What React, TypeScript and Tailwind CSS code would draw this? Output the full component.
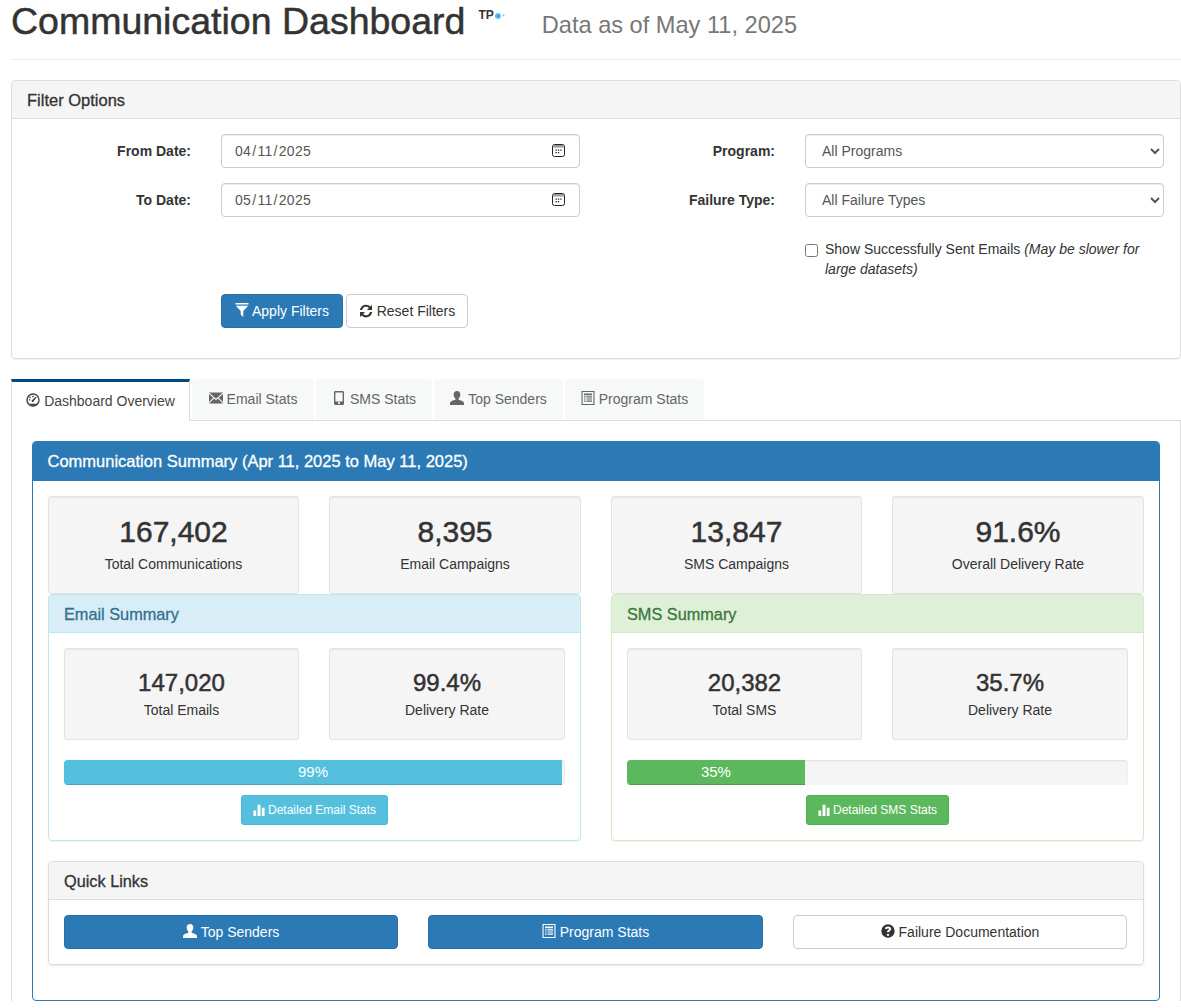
import type { ReactNode } from "react";

const blueBtn = "bg-[#2b7ab5] border-[#2a6fa5] text-white";
const whiteBtn = "bg-white border-[#cccccc] text-[#333333]";

function Glyph({ children, className }: { children: ReactNode; className?: string }) {
  return (
    <svg viewBox="0 0 14 14" fill="currentColor" className={`inline-block shrink-0 ${className ?? "w-[14px] h-[14px]"}`}>
      {children}
    </svg>
  );
}

const FilterIcon = () => (
  <Glyph>
    <path d="M.5 0h13v1.500H.5zM.8 2.800h12.400L8.300 8v6L5.700 11.800V8z" />
  </Glyph>
);
const RefreshIcon = () => (
  <Glyph>
    <path d="M7 .8c1.700 0 3.200.7 4.300 1.800L13 .9v5H8l1.900-1.900A3.900 3.900 0 0 0 3.100 6H.9A6 6 0 0 1 7 .8zM1 8.100h5L4.100 10a3.900 3.900 0 0 0 6.800-2h2.200A6 6 0 0 1 2.700 11.400L1 13.100z" />
  </Glyph>
);
const GaugeIcon = () => (
  <Glyph>
    <path
      fillRule="evenodd"
      d="M7 .3a6.700 6.700 0 1 1 0 13.400A6.700 6.700 0 0 1 7 .3zm0 1.500a5.200 5.200 0 0 0-5.200 5.200c0 1.500.6 2.800 1.600 3.800h7.200A5.200 5.200 0 0 0 7 1.800zM6.300 2.800h1.400v1.400H6.300zM2.900 6.200h1.400v1.400H2.900zM3.900 3.500l1.100 1-.9.900-1-1zM9.900 3.600l.8.700-2.700 3.500a1.200 1.200 0 1 1-1.500-1.100z"
    />
  </Glyph>
);
const MailIcon = () => (
  <Glyph>
    <path d="M0 1.600h14L7 7.800zM0 3l4.300 3.800L0 11zM14 3v8L9.700 6.800zM5.100 7.600 7 9.200l1.900-1.600 5.100 4.800H0z" />
  </Glyph>
);
const PhoneIcon = () => (
  <Glyph>
    <path
      fillRule="evenodd"
      d="M3.500 0h7c.9 0 1.500.6 1.500 1.500v11c0 .9-.6 1.500-1.500 1.500h-7C2.600 14 2 13.400 2 12.500v-11C2 .6 2.600 0 3.500 0zm-.1 1.600v8.900h7.200V1.600zM7 11a1.100 1.100 0 1 0 0 2.200A1.100 1.100 0 0 0 7 11z"
    />
  </Glyph>
);
const UserIcon = () => (
  <Glyph>
    <path d="M7 0c2.200 0 3.300 1.500 3.300 3.500 0 1.600-.7 3.200-1.700 4.100v1.200c1.900.5 4.900 1.300 5.400 3V14H0v-2.200c.5-1.700 3.500-2.500 5.400-3V7.600C4.400 6.700 3.700 5.100 3.700 3.500 3.700 1.500 4.800 0 7 0z" />
  </Glyph>
);
const ListIcon = () => (
  <Glyph>
    <path
      fillRule="evenodd"
      d="M.5 0h13v14H.5zm1.100 1.100v11.800h10.800V1.100zM3 2.400h8v1.800H3zM3 5.200h1.500v1.200H3zM5.500 5.200H11v1.200H5.500zM3 7.400h1.500v1.200H3zM5.500 7.400H11v1.200H5.500zM3 9.600h1.500v1.200H3zM5.500 9.600H11v1.200H5.500z"
    />
  </Glyph>
);
const BarsIcon = () => (
  <Glyph className="w-[12px] h-[12px]">
    <path d="M.5 7.500h3.200V14H.5zM5.300 1h3.400v13H5.300zM10.300 4.500h3.200V14h-3.200z" />
  </Glyph>
);
const HelpIcon = () => (
  <Glyph>
    <path
      fillRule="evenodd"
      d="M7 .3a6.700 6.700 0 1 1 0 13.400A6.700 6.700 0 0 1 7 .3zM5.900 9.900v1.900h2.200V9.900zM7 2.400c-1.600 0-2.800.8-3 2.400l2 .4c.1-.7.400-1 1-1s.9.300.9.800c0 1-2 1.200-2 3.300h2.200c0-1.300 2.100-1.400 2.100-3.500 0-1.500-1.300-2.400-3.200-2.400z"
    />
  </Glyph>
);

function FormLabel({ children }: { children: ReactNode }) {
  return <label className="text-right font-bold text-[14px] leading-[34px] text-[#333333]">{children}</label>;
}

function DateField({ value }: { value: string }) {
  return (
    <div className="relative h-[34px]">
      <input
        type="date"
        defaultValue={value}
        className="h-[34px] w-full rounded border border-[#cccccc] bg-white pl-[12px] pr-[13px] text-[14px] tracking-[0.3px] text-[#555555] shadow-[inset_0_1px_1px_rgba(0,0,0,0.075)] [&::-webkit-calendar-picker-indicator]:opacity-0"
      />
      <svg viewBox="0 0 13 13" className="absolute right-[15px] top-[10px] w-[13px] h-[13px] pointer-events-none" fill="none">
        <rect x="0.5" y="0.5" width="12" height="12" rx="2" stroke="#222222" />
        <rect x="1" y="1" width="11" height="2.500" fill="#9a9a9a" />
        <path d="M3.500 5.500h1.300v1.300H3.500zM5.900 5.500h1.300v1.300H5.900zM8.300 5.500h1.300v1.300H8.300zM3.500 8h1.300v1.300H3.500zM5.900 8h1.300v1.300H5.900z" fill="#222222" />
      </svg>
    </div>
  );
}

function SelectField({ label }: { label: string }) {
  return (
    <select className="h-[34px] w-full rounded border border-[#cccccc] bg-white pl-[12px] pr-[0px] text-[14px] text-[#555555] shadow-[inset_0_1px_1px_rgba(0,0,0,0.075)]">
      <option>{label}</option>
    </select>
  );
}

function Tab({ icon, label, active, width }: { icon: ReactNode; label: string; active?: boolean; width: string }) {
  return (
    <div
      className={
        active
          ? `${width} h-[42px] -mb-px flex items-center justify-center gap-[4px] bg-white border-t-[3px] border-t-[#004a80] border-x border-x-[#dddddd] text-[#444444] relative z-10`
          : `${width} h-[41px] flex items-center justify-center gap-[4px] rounded-t bg-[#f7f8f8] text-[#666666]`
      }
    >
      <span className="flex -mt-[3px]">{icon}</span>
      <span>{label}</span>
    </div>
  );
}

function StatCard({ value, label, big }: { value: string; label: string; big?: boolean }) {
  return (
    <div
      className={`flex flex-col items-center rounded-[3px] border border-[#e3e3e3] bg-[#f5f5f5] shadow-[inset_0_1px_1px_rgba(0,0,0,0.05)] ${
        big ? "h-[98px] pt-[18px]" : "h-[92px] pt-[21px]"
      }`}
    >
      <div
        className={`text-[#333333] [-webkit-text-stroke:0.5px_#333333] ${
          big ? "text-[30px] leading-[33px]" : "text-[24px] leading-[26px]"
        }`}
      >
        {value}
      </div>
      <div className={`text-[14px] leading-[20px] text-[#333333] ${big ? "mt-[6px]" : "mt-[4px]"}`}>{label}</div>
    </div>
  );
}

function ChannelPanel({
  title,
  border,
  headBg,
  headText,
  stats,
  percent,
  fill,
  barWidth,
  btnClass,
  btnLabel,
}: {
  title: string;
  border: string;
  headBg: string;
  headText: string;
  stats: { value: string; label: string }[];
  percent: string;
  fill: string;
  barWidth: number;
  btnClass: string;
  btnLabel: string;
}) {
  return (
    <div className={`h-[247px] rounded border bg-white shadow-[0_1px_1px_rgba(0,0,0,0.05)] ${border}`}>
      <div className={`h-[38px] pt-[2px] rounded-t-[3px] border-b px-[15px] flex items-center text-[16.3px] ${border} ${headBg} ${headText} [-webkit-text-stroke:0.3px]`}>
        {title}
      </div>
      <div className="px-[15px] pt-[15px]">
        <div className="grid grid-cols-[235px_236px] gap-x-[30px]">
          {stats.map((s) => (
            <StatCard key={s.label} value={s.value} label={s.label} />
          ))}
        </div>
        <div className="mt-[20px] h-[25px] overflow-hidden rounded bg-[#f5f5f5] shadow-[inset_0_1px_2px_rgba(0,0,0,0.1)]">
          <div
            className={`h-full flex items-center justify-center text-white text-[15px] shadow-[inset_0_-1px_0_rgba(0,0,0,0.15)] ${fill}`}
            style={{ width: `${barWidth}%` }}
          >
            {percent}
          </div>
        </div>
        <div className="mt-[10px] flex justify-center">
          <div className={`h-[30px] px-[10.5px] flex items-center gap-[3px] rounded-[3px] border text-[12px] text-white ${btnClass}`}>
            <BarsIcon />
            {btnLabel}
          </div>
        </div>
      </div>
    </div>
  );
}

function LinkButton({ icon, label, cls }: { icon: ReactNode; label: string; cls: string }) {
  return (
    <div className={`h-[34px] flex items-center justify-center gap-[4px] rounded border text-[14px] ${cls}`}>
      <span className="flex -mt-[2px]">{icon}</span>
      {label}
    </div>
  );
}

export default function App() {
  return (
    <div className="h-[1008px] overflow-hidden bg-white pl-[11px] font-['Liberation_Sans',Arial,sans-serif] text-[14px] text-[#333333]">
      {/* page header */}
      <div className="h-[60px] border-b border-[#eeeeee] flex items-start">
        <h1 className="text-[37.5px] leading-[40px] mt-[1px] text-[#333333] [-webkit-text-stroke:0.5px_#333333]">
          Communication Dashboard
        </h1>
        <div className="relative ml-[13px] mt-[8px] flex items-start">
          <span className="text-[12px] leading-[14px] font-bold text-[#333333]">TP</span>
          <svg viewBox="0 0 12 8" className="w-[12px] h-[8px] mt-[4px]">
            <circle cx="4" cy="4" r="3" fill="#6cc0f5" />
            <circle cx="4" cy="4" r="1.300" fill="#2f97ea" />
            <circle cx="9.500" cy="3.500" r="1" fill="#6cc0f5" />
          </svg>
        </div>
        <span className="ml-[36px] mt-[11px] text-[23.6px] leading-[28px] text-[#777777]">Data as of May 11, 2025</span>
      </div>

      {/* filters */}
      <div className="mt-[20px] h-[279px] rounded border border-[#dddddd] shadow-[0_1px_1px_rgba(0,0,0,0.05)]">
        <div className="h-[38px] pt-[2px] bg-[#f5f5f5] border-b border-[#dddddd] rounded-t-[3px] px-[15px] flex items-center text-[16.5px] [-webkit-text-stroke:0.3px_#333333]">
          Filter Options
        </div>
        <div className="pt-[15px] grid grid-cols-[179px_359px_165px_359px] gap-x-[30px] gap-y-[15px]">
          <FormLabel>From Date:</FormLabel>
          <DateField value="2025-04-11" />
          <FormLabel>Program:</FormLabel>
          <SelectField label="All Programs" />
          <FormLabel>To Date:</FormLabel>
          <DateField value="2025-05-11" />
          <FormLabel>Failure Type:</FormLabel>
          <SelectField label="All Failure Types" />
        </div>
        <div className="mt-[22px] ml-[793px] w-[340px] flex gap-[7px] text-[14px] leading-[20px]">
          <input type="checkbox" className="mt-[5px] w-[13px] h-[13px] shrink-0" />
          <span>
            Show Successfully Sent Emails <em>(May be slower for large datasets)</em>
          </span>
        </div>
        <div className="mt-[15px] ml-[209px] flex gap-[3px]">
          <div className={`h-[34px] w-[122px] flex items-center justify-center gap-[3px] rounded border ${blueBtn}`}>
            <span className="flex -mt-[3px]">
              <FilterIcon />
            </span>
            Apply Filters
          </div>
          <div className={`h-[34px] w-[122px] flex items-center justify-center gap-[4px] rounded border ${whiteBtn}`}>
            <RefreshIcon />
            Reset Filters
          </div>
        </div>
      </div>

      {/* tabs */}
      <div className="mt-[20px] flex items-end gap-[2px] border-b border-[#dddddd]">
        <Tab active width="w-[179px]" icon={<GaugeIcon />} label="Dashboard Overview" />
        <Tab width="w-[122px]" icon={<MailIcon />} label="Email Stats" />
        <Tab width="w-[116px]" icon={<PhoneIcon />} label="SMS Stats" />
        <Tab width="w-[129px]" icon={<UserIcon />} label="Top Senders" />
        <Tab width="w-[139px]" icon={<ListIcon />} label="Program Stats" />
      </div>
      <div className="border-x border-[#dddddd] px-[20px] pt-[20px]">
        <div className="h-[560px] rounded border border-[#2b7ab5]">
          <div className="h-[39px] bg-[#2b7ab5] rounded-t-[3px] pl-[14.5px] flex items-center text-white text-[16.5px] [-webkit-text-stroke:0.3px_#ffffff]">
            Communication Summary (Apr 11, 2025 to May 11, 2025)
          </div>
          <div className="px-[15px] pt-[15px]">
            <div className="grid grid-cols-[251px_252px_251px_252px] gap-x-[30px]">
              <StatCard big value="167,402" label="Total Communications" />
              <StatCard big value="8,395" label="Email Campaigns" />
              <StatCard big value="13,847" label="SMS Campaigns" />
              <StatCard big value="91.6%" label="Overall Delivery Rate" />
            </div>
            <div className="grid grid-cols-[533px_533px] gap-x-[30px]">
              <ChannelPanel
                title="Email Summary"
                border="border-[#bce8f1]"
                headBg="bg-[#d9edf7]"
                headText="text-[#31708f]"
                stats={[
                  { value: "147,020", label: "Total Emails" },
                  { value: "99.4%", label: "Delivery Rate" },
                ]}
                percent="99%"
                fill="bg-[#55c0de]"
                barWidth={99.4}
                btnClass="bg-[#55c0de] border-[#46b8da]"
                btnLabel="Detailed Email Stats"
              />
              <ChannelPanel
                title="SMS Summary"
                border="border-[#d6e9c6]"
                headBg="bg-[#dff0d8]"
                headText="text-[#3c763d]"
                stats={[
                  { value: "20,382", label: "Total SMS" },
                  { value: "35.7%", label: "Delivery Rate" },
                ]}
                percent="35%"
                fill="bg-[#5cb85c]"
                barWidth={35.5}
                btnClass="bg-[#5cb85c] border-[#4cae4c]"
                btnLabel="Detailed SMS Stats"
              />
            </div>
            <div className="mt-[20px] h-[104px] rounded border border-[#dddddd] shadow-[0_1px_2px_rgba(0,0,0,0.1)]">
              <div className="h-[38px] pt-[2px] bg-[#f5f5f5] border-b border-[#dddddd] rounded-t-[3px] px-[15px] flex items-center text-[16.3px] [-webkit-text-stroke:0.3px_#333333]">
                Quick Links
              </div>
              <div className="px-[15px] pt-[15px] grid grid-cols-[334px_335px_334px] gap-x-[30px]">
                <LinkButton icon={<UserIcon />} label="Top Senders" cls={blueBtn} />
                <LinkButton icon={<ListIcon />} label="Program Stats" cls={blueBtn} />
                <LinkButton icon={<HelpIcon />} label="Failure Documentation" cls={whiteBtn} />
              </div>
            </div>
          </div>
        </div>
      </div>
    </div>
  );
}
